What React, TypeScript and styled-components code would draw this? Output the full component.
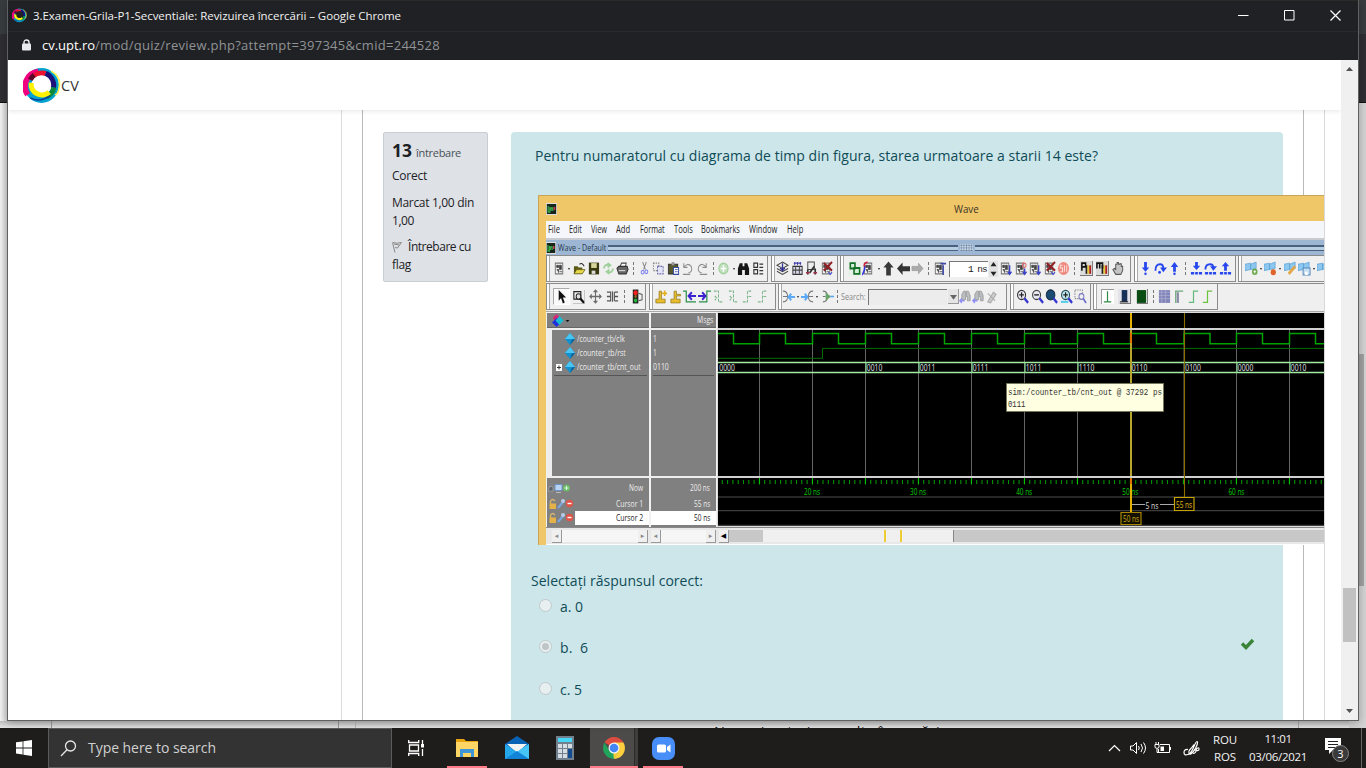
import React, { useLayoutEffect, useRef } from "react";
import styled, { createGlobalStyle, css } from "styled-components";

const Global = createGlobalStyle`
  * { box-sizing: border-box; }
  body { margin: 0; overflow: hidden; font-family: "Open Sans", "Noto Sans", sans-serif; }
  svg { display: block; flex: none; }
`;

/* ---------- fitted text ---------- */

const TextBox = styled.span<{ $w: number; $size: number; $color?: string; $weight?: number; $lh?: number }>`
  display: block;
  flex: none;
  width: ${(p) => p.$w}px;
  height: ${(p) => p.$lh ?? 18}px;
  line-height: ${(p) => p.$lh ?? 18}px;
  font-size: ${(p) => p.$size}px;
  font-weight: ${(p) => p.$weight ?? 400};
  color: ${(p) => p.$color ?? "inherit"};
  white-space: pre;
`;
const Condensed = styled.span`
  display: inline-block;
  transform-origin: left center;
`;

type FitProps = { w: number; size: number; color?: string; weight?: number; lh?: number; children: string };

/* Sets the tracking so that the run of text is exactly as wide as its box. */
function Fit({ w, size, color, weight, lh, children }: FitProps) {
  const ref = useRef<HTMLSpanElement>(null);
  useLayoutEffect(() => {
    const el = ref.current;
    if (!el) return;
    el.style.letterSpacing = "0px";
    const natural = el.getBoundingClientRect().width;
    el.style.letterSpacing = `${(w - natural) / children.length}px`;
  }, [w, children]);
  return (
    <TextBox $w={w} $size={size} $color={color} $weight={weight} $lh={lh}>
      <span ref={ref}>{children}</span>
    </TextBox>
  );
}

/* Condenses the glyphs themselves, for the simulator's narrow interface font. */
function Narrow({ w, size = 9.4, color, lh = 14, children }: Omit<FitProps, "size"> & { size?: number }) {
  const ref = useRef<HTMLSpanElement>(null);
  useLayoutEffect(() => {
    const el = ref.current;
    if (el) el.style.transform = `scaleX(${w / el.offsetWidth})`;
  }, [w, children]);
  return (
    <TextBox $w={w} $size={size} $color={color} $lh={lh}>
      <Condensed ref={ref}>{children}</Condensed>
    </TextBox>
  );
}

/* ---------- desktop and window frame ---------- */

const Desktop = styled.div`
  position: relative;
  display: flex;
  flex-direction: column;
  width: 1366px;
  height: 768px;
  overflow: hidden;
  background: #fff;
`;

const BackWindow = styled.div`
  display: flex;
  flex-direction: column;
  height: 728px;
`;
const BackTabs = styled.div`
  height: 34px;
  background: #393c3f;
`;
const BackBar = styled.div`
  height: 69px;
  background: #2f2e33;
  border-bottom: 1px solid #111;
`;
const BackPage = styled.div`
  display: flex;
  flex: 1;
  align-items: flex-end;
  background: linear-gradient(90deg, #f4f4f4 0, #d2d2d2 8px, #d2d2d2 1358px, #dedede 1366px);
`;
const BackStrip = styled.div`
  display: flex;
  width: 1349px;
  height: 7px;
  background: linear-gradient(#c2c2c2, #e6e6e6);
`;
const BackColumn = styled.div<{ $w: number; $line: string }>`
  flex: none;
  width: ${(p) => p.$w}px;
  border-right: 1px solid ${(p) => p.$line};
`;
const BackText = styled.div`
  width: 943px;
  height: 7px;
  padding-left: 358px;
  overflow: hidden;
  border-right: 1px solid #aaa;
`;
const BackScroll = styled.div`
  align-self: stretch;
  width: 17px;
  padding: 251px 2px 0 0;
  background: #d4d4d4;
`;
const BackThumb = styled.div`
  height: 232px;
  background: #a3a3a3;
`;

const Window = styled.div`
  position: absolute;
  left: 7px;
  top: 0;
  display: flex;
  flex-direction: column;
  width: 1352px;
  height: 721px;
  border: 1px solid #606060;
  border-top: 0;
  background: #fff;
  box-shadow: 0 2px 9px rgba(0, 0, 0, 0.28);
`;
const TitleBar = styled.div`
  display: flex;
  align-items: center;
  height: 32px;
  padding: 0 0 1px 4px;
  gap: 6px;
  color: #f1f1f1;
  background: #202124;
  border-top: 1px solid #292b28;
  border-bottom: 1px solid #292a2d;
`;
const WindowButtons = styled.div`
  display: flex;
  align-items: center;
  gap: 35px;
  margin-left: auto;
  padding-right: 17px;
`;
const AddressBar = styled.div`
  display: flex;
  align-items: center;
  height: 28px;
  padding: 0 0 2px 14px;
  background: #202124;
`;
const LockSlot = styled.div`
  width: 20px;
`;
const Viewport = styled.div`
  display: flex;
  height: 660px;
  overflow: hidden;
`;
const Page = styled.div`
  width: 1333px;
  height: 660px;
  overflow: hidden;
`;
const SiteHeader = styled.div`
  position: relative;
  display: flex;
  align-items: center;
  height: 50px;
  padding: 2px 0 0 15px;
  background: #fff;
  box-shadow: 0 2px 4px rgba(0, 0, 0, 0.08);
  z-index: 1;
`;
const ScrollBar = styled.div`
  display: flex;
  flex-direction: column;
  align-items: center;
  width: 17px;
  padding: 7px 0;
  background: #f0f0f0;
`;
const ScrollThumb = styled.div`
  width: 13px;
  height: 54px;
  margin: 517px 0 auto;
  background: #c1c1c1;
`;

/* ---------- quiz page ---------- */

const Columns = styled.div`
  display: flex;
  height: 610px;
`;
const LeftPane = styled.div`
  flex: none;
  width: 334px;
  margin-right: 20px;
  border-right: 1px solid #dcdcdc;
`;
const Main = styled.div`
  display: flex;
  flex: none;
  align-items: flex-start;
  gap: 23px;
  width: 942px;
  padding: 22px 0 0 20px;
  border: solid #b9b9b9;
  border-width: 0 1px;
`;
const RightPane = styled.div`
  flex: none;
  width: 17px;
  margin-left: 20px;
  border-left: 1px solid #d9d9d9;
`;
const Info = styled.div`
  display: flex;
  flex: none;
  flex-direction: column;
  gap: 8.4px;
  width: 105px;
  height: 150px;
  padding: 8px;
  color: #1d2125;
  background: #dee2e6;
  border: 1px solid #c7ced4;
  border-radius: 2px;
`;
const Line = styled.div<{ $gap?: number }>`
  display: flex;
  align-items: center;
  gap: ${(p) => p.$gap ?? 0}px;
`;
const Baseline = styled.div`
  display: flex;
  align-items: baseline;
  gap: 4px;
  height: 18px;
`;
const Question = styled.div`
  flex: none;
  width: 772px;
  height: 600px;
  padding-top: 12px;
  color: #0f4c57;
  background: #cde6ea;
  border-radius: 4px;
`;
const Prompt = styled.div`
  padding-left: 24px;
`;
const AnswerTitle = styled.div`
  padding: 24px 0 2px 20px;
`;
const Answer = styled.div`
  display: flex;
  align-items: center;
  height: 24px;
  margin-bottom: 17.3px;
  padding: 0 29px 0 28px;
  gap: 8px;
`;
const Radio = styled.span<{ $on?: boolean }>`
  display: flex;
  align-items: center;
  justify-content: center;
  width: 13px;
  height: 13px;
  margin-top: -3px;
  border: 1px solid #c0c9cb;
  border-radius: 50%;
  background: #e8eff1;
  &::after {
    content: "";
    width: 7px;
    height: 7px;
    border-radius: 50%;
    background: ${(p) => (p.$on ? "#bec5c6" : "transparent")};
  }
`;
const Mark = styled.span`
  margin: -9px -1px 0 auto;
`;

/* ---------- Wave simulator ---------- */

const Wave = styled.div`
  display: flex;
  flex-direction: column;
  width: 786px;
  height: 350px;
  margin: 27px 0 0 27px;
  padding-left: 7px;
  font-family: "Open Sans", sans-serif;
  color: #222;
  background: #efc668;
  border: solid #c9a55a;
  border-width: 1px 0 0 1px;
`;
const WaveTitle = styled.div`
  display: flex;
  align-items: center;
  height: 25px;
  gap: 397px;
`;
const Menu = styled.div`
  display: flex;
  height: 17px;
  padding-left: 2px;
  background: #f4f6f9;
`;
const MenuItem = styled.div<{ $gap: number }>`
  margin-right: ${(p) => p.$gap}px;
`;
const PaneTitle = styled.div`
  display: flex;
  align-items: center;
  height: 17px;
  gap: 2px;
  background: #9cb6d3;
  border-top: 2px solid #c8cbd0;
`;
const Grip = styled.div`
  flex: 1;
  height: 6px;
  border: solid #4a627f;
  border-width: 2px 0 1px;
  background: #b6cde2;
`;
const GripDots = styled.div`
  width: 13px;
  height: 7px;
  background: radial-gradient(#60758f 0.7px, transparent 1px) 0 0 / 2.6px 2.6px #c0d2e5;
`;
const ToolRow = styled.div`
  display: flex;
  gap: 2.5px;
  height: 28px;
  background: #efefef;
  border-top: 1px solid #8b8b8b;
`;
const Group = styled.div<{ $w: number; $pad: number }>`
  display: flex;
  flex: none;
  align-items: center;
  width: ${(p) => p.$w}px;
  height: 26px;
  padding-left: ${(p) => p.$pad}px;
  overflow: hidden;
  background: #f0f0f0;
  border: solid #8c8c8c;
  border-width: 0 1px 1px 1px;
  box-shadow: inset 2px 0 #fff, inset 3px 0 #a9a9a9;
`;
const Cell = styled.span<{ $w: number; $pressed?: boolean }>`
  display: flex;
  flex: none;
  align-items: center;
  justify-content: center;
  width: ${(p) => p.$w}px;
  height: 17px;
  ${(p) =>
    p.$pressed &&
    css`
      border: 1px solid #aaa;
      border-right-color: #fff;
      border-bottom-color: #fff;
      background: #fafafa;
    `}
`;
const Separator = styled.i`
  flex: none;
  width: 1px;
  height: 13px;
  margin: 0 3px;
  border-left: 1px dashed #777;
`;
const Drop = styled.i`
  flex: none;
  margin: 1px 1.75px 0;
  border: 1.5px solid transparent;
  border-top: 2px solid #222;
  border-bottom: 0;
`;
const Field = styled.span<{ $w: number; $bg: string }>`
  display: flex;
  flex: none;
  align-items: center;
  justify-content: flex-end;
  width: ${(p) => p.$w}px;
  height: 16px;
  margin-left: 2px;
  padding: 1px 1px 0 0;
  font: 9.5px "Liberation Mono", monospace;
  letter-spacing: -1.1px;
  background: ${(p) => p.$bg};
  border: solid #777;
  border-width: 1.5px 0 0 1.5px;
`;
const Panes = styled.div`
  display: flex;
  height: 216px;
  border: solid #a8a8a8;
  border-width: 1px 0 0 1px;
  background: #dcdcdc;
  padding-top: 1px;
`;
const Column = styled.div<{ $w: number }>`
  display: flex;
  flex: none;
  flex-direction: column;
  width: ${(p) => p.$w}px;
  margin-right: 2px;
  color: #ececec;
  background: #808080;
  outline: 1px solid #f1f1f1;
`;
const ColumnHead = styled.div`
  display: flex;
  align-items: center;
  justify-content: space-between;
  height: 15px;
  padding: 0 3px 0 5px;
  border-bottom: 1px solid #666;
`;
const Signals = styled.div<{ $strip?: boolean }>`
  height: 150px;
  padding: 1.5px 2px 0 2px;
  border: solid #eee;
  border-width: 2px 0 2px ${(p) => (p.$strip ? 5 : 0)}px;
`;
const SignalRow = styled.div<{ $indent: number }>`
  display: flex;
  align-items: center;
  height: 14.4px;
  gap: 2px;
  padding-left: ${(p) => p.$indent}px;
`;
const Rule = styled.div`
  height: 1px;
  background: #555;
`;
const CursorRow = styled.div<{ $h: number }>`
  display: flex;
  align-items: center;
  height: ${(p) => p.$h}px;
`;
const CursorText = styled.div<{ $white?: boolean }>`
  display: flex;
  flex: 1;
  align-items: center;
  justify-content: flex-end;
  height: 100%;
  padding-right: 6px;
  color: ${(p) => (p.$white ? "#222" : "#ececec")};
  background: ${(p) => (p.$white ? "#fff" : "transparent")};
`;
const ScrollRow = styled.div`
  display: flex;
  height: 18px;
  padding: 2px 0 2px 6px;
  background: #e8e8e8;
  border-top: 1px solid #888;
  border-bottom: 1px solid #fff;
`;
const MiniScroll = styled.div<{ $w: number; $bg?: string }>`
  display: flex;
  flex: none;
  align-items: center;
  justify-content: space-between;
  width: ${(p) => p.$w}px;
  margin-right: 3px;
  background: ${(p) => p.$bg ?? "#f6f6f6"};
`;
const MiniButton = styled.span<{ $dark?: boolean }>`
  flex: none;
  width: 10px;
  height: 13px;
  font: 7px/12px "DejaVu Sans", sans-serif;
  text-align: center;
  color: ${(p) => (p.$dark ? "#000" : "#888")};
  background: #f0f0f0;
  border: solid #999;
  border-width: 0 1px 1px 0;
`;
const MiniThumb = styled.span`
  display: flex;
  flex: none;
  gap: 14.5px;
  width: 191px;
  height: 12px;
  margin: 0 auto 0 34px;
  padding-left: 121px;
  background: #f0f0f0;
  border-right: 1px solid #888;
`;
const MiniMark = styled.i`
  flex: none;
  width: 1.5px;
  background: #f0cc38;
`;

/* ---------- toolbar glyphs ---------- */

const page = (
  <>
    <path d="M2.5 2h8v10h-8z" fill="#f3f3f3" stroke="#777" />
    <path d="M4 4h2v2H4zM7 4h2v4H7zM4 8h2v3M7 10h3" fill="#444" stroke="#444" strokeWidth=".8" />
  </>
);
const perfBars = (
  <>
    <path d="M0 0h13v13H0z" fill="#dcdcdc" />
    <path d="M13.500 0v13.500H0" stroke="#777" fill="none" />
    <path d="M6 4h2v8H6z" fill="#222" />
    <path d="M8 4h2v8H8z" fill="#e0c832" />
    <path d="M10 4h2v8h-2z" fill="#b02020" />
  </>
);
const glyphs: Record<string, React.ReactNode> = {
  app: (
    <>
      <path d="M0 1h13v12H0z" fill="#ddd" />
      <path d="M1 2h11v10H1z" fill="#17251b" />
      <path d="M2.5 4v6h2V5M6 9V6h2v3" stroke="#3cae4c" strokeWidth="1.4" fill="none" />
      <path d="M9 5h2v3H9z" fill="#c23a52" />
    </>
  ),
  doc: page,
  open: (
    <>
      <path d="M1 12V5h4l1 1h4v6z" fill="#5d5a16" />
      <path d="M1 12l3-4h9l-3 4z" fill="#e5d64c" stroke="#55510f" strokeWidth=".7" />
      <path d="M7 3q3-2 5 2" stroke="#222" fill="none" />
    </>
  ),
  save: (
    <>
      <path d="M2 1.500h11v11H2z" fill="#3a3a12" />
      <path d="M4.500 2h6v4.500h-6z" fill="#d6d69a" />
      <path d="M5 9h4v3H5z" fill="#ddd" />
    </>
  ),
  refresh: <path d="M2 7q1-5 6-3m-2-2l3 2-3 2M12 7q-1 5-6 3m2-2l-3 2 3 2" fill="none" stroke="#9ed09a" strokeWidth="1.8" />,
  print: (
    <>
      <path d="M4 6l2-4h5l-1 4" fill="#fff" stroke="#444" />
      <path d="M1 7l2-2h9l1 3-2 4H3z" fill="#666" stroke="#333" />
      <path d="M3 9h7" stroke="#ddd" />
    </>
  ),
  cut: (
    <>
      <path d="M5 1l3 7M9 1L6 8" stroke="#888" fill="none" />
      <circle cx="5" cy="10.500" r="1.600" fill="none" stroke="#727af0" />
      <circle cx="9" cy="10" r="1.600" fill="none" stroke="#727af0" />
    </>
  ),
  copy: (
    <>
      <path d="M1.500 2h6v7h-6z" fill="#eee" stroke="#888" strokeDasharray="1.5 1" />
      <path d="M6 5h6v7H6z" fill="#e5e5fa" stroke="#6c6ca8" strokeDasharray="2 1" />
    </>
  ),
  paste: (
    <>
      <path d="M1.500 3h10v9h-10z" fill="#57572d" stroke="#333" />
      <path d="M5 1h3v3H5z" fill="#999" />
      <path d="M7 6h5.500v6.500H7z" fill="#fff" stroke="#334c9e" />
      <path d="M8.500 8h3M8.500 10h3" stroke="#334c9e" strokeWidth=".8" />
    </>
  ),
  undo: <path d="M3 2v4h4M3 6q4-5 8-1 2 5-3 6M2 12.500h8" fill="none" stroke="#8d8d8d" strokeWidth="1.100" />,
  redo: <path d="M11 2v4H7M11 6Q7 1 3 5q-2 5 3 6M4 12.500h8" fill="none" stroke="#8d8d8d" strokeWidth="1.100" />,
  add: (
    <>
      <circle cx="7" cy="7" r="5" fill="#bfe0ba" stroke="#9fcd9a" />
      <path d="M7 4v6M4 7h6" stroke="#fff" strokeWidth="1.6" />
    </>
  ),
  find: <path d="M1 13V7l2-5h3v3h2V2h3l2 5v6H8.500V8.500h-3V13z" fill="#161616" />,
  tree: <path d="M2 2h4v4H2zM2 8h4v4H2zM8 3h4M8 6h4M8 9h4M8 12h4" fill="none" stroke="#333" strokeWidth="1.200" />,
  layers: (
    <>
      <path d="M7 1l6 3-6 3-6-3z" fill="#eee" stroke="#444" />
      <path d="M1 7l6 3 6-3M1 9.500l6 3 6-3" fill="none" stroke="#444" />
      <path d="M7 2v7M4.500 6.500L7 9l2.500-2.500" stroke="#34349a" strokeWidth="1.400" fill="none" />
    </>
  ),
  compile: (
    <>
      <path d="M2 5h10v7.500H2z" fill="#d9d9ea" stroke="#333" />
      <path d="M2 8.500h10M5 5v7M9 5v7" stroke="#444" />
      <path d="M3 2h8M4 1v3M7 1v3M10 1v3" stroke="#3c3ca8" />
    </>
  ),
  simulate: (
    <>
      <path d="M3 1h7v7H3z" fill="#eee" stroke="#444" />
      <path d="M3 12.500V8M11 12.500V7M5 11l5-6" stroke="#333" strokeWidth="1.800" />
      <path d="M1 11h4M9 11h4" stroke="#a03045" strokeWidth="1.500" />
    </>
  ),
  stopDoc: (
    <>
      {page}
      <path d="M4 2l9 7M13 1L4 9" stroke="#8f1f24" strokeWidth="2" />
      <path d="M9 10.500l2 2 2-2" stroke="#3b46d0" fill="none" />
    </>
  ),
  restart: (
    <>
      <path d="M0 0h14v14H0z" fill="#e9efe9" />
      <path d="M2.500 2h5v5h-5zM6.500 6.500h6v5.500h-6z" fill="#d8f0d8" stroke="#137028" strokeWidth="1.700" />
    </>
  ),
  lines: (
    <>
      {page}
      <path d="M6 1Q1 2 3 6" stroke="#d2233e" fill="none" strokeWidth="1.700" />
      <path d="M3 5Q3 10 0 13" stroke="#3434d8" fill="none" strokeWidth="1.600" />
    </>
  ),
  up: <path d="M7 .5l5.500 5.500H9.500v7.500h-5V6h-3z" fill="#3a3a3a" />,
  left: <path d="M0 7l6-5.500V5h8v4.500H6V13z" fill="#333" />,
  right: <path d="M13 7L8 2v3H1v4h7v3z" fill="#aaa" stroke="#999" strokeWidth=".6" />,
  runTo: (
    <>
      {page}
      <path d="M11 13V4M8 2.500h6" stroke="#3f49aa" strokeWidth="1.600" />
    </>
  ),
  run: (
    <>
      {page}
      <path d="M11.500 4v8M9.500 10l2 2.500 2-2.500" stroke="#3941c8" fill="none" strokeWidth="1.400" />
    </>
  ),
  runRed: (
    <>
      {page}
      <path d="M11.500 7v5M9.500 10l2 2.500 2-2.500" stroke="#3941c8" fill="none" strokeWidth="1.400" />
      <circle cx="11" cy="4" r="2" fill="none" stroke="#e06a6a" />
    </>
  ),
  brk: (
    <>
      <circle cx="7" cy="7" r="6" fill="#ee8a80" />
      <path d="M6 4H3.500v2.500H6V10H3.500M8 4v6M10.500 4v6" stroke="#fbe2de" fill="none" />
    </>
  ),
  perf: (
    <>
      {perfBars}
      <path d="M2 9V2h4v3.500H2" stroke="#111" strokeWidth="1.700" fill="none" />
    </>
  ),
  perfM: (
    <>
      {perfBars}
      <path d="M1 7V2h6v5M4 2v5" stroke="#111" strokeWidth="1.700" fill="none" />
    </>
  ),
  hand: <path d="M4 12.500L1 8l1.500-1L4 8V3h1.500V1.500H7V3h1.500V2.500H10V5h1.500v4l-2 3.500z" fill="#c4c4c4" stroke="#555" />,
  stepIn: (
    <>
      <path d="M5.500 1h3v5h2.500L7 10 3 6h2.500z" fill="#2848ee" />
      <circle cx="7" cy="12" r="1.300" fill="#2848ee" />
    </>
  ),
  stepOver: (
    <>
      <path d="M1.500 9q0-6 5-6 3.500 0 3.500 4" stroke="#2848ee" strokeWidth="2" fill="none" />
      <path d="M6.500 6H14l-4 4.500z" fill="#2848ee" />
      <circle cx="6" cy="10.500" r="1.500" fill="#2848ee" />
    </>
  ),
  stepOut: (
    <>
      <path d="M5.500 10V5.500H3L7 1l4 4.500H8.500V10z" fill="#2848ee" />
      <circle cx="7" cy="12" r="1.300" fill="#2848ee" />
    </>
  ),
  stepIn2: (
    <>
      <path d="M5.500 1h3v3.500h2.500L7 8.500l-4-4h2.500z" fill="#2848ee" />
      <path d="M1 11.500h3.500M5.500 11.500h3M9.500 11.500H13" stroke="#2848ee" strokeWidth="2.400" />
    </>
  ),
  stepOver2: (
    <>
      <path d="M1.500 8q0-5 5-5 3.500 0 3.500 3" stroke="#2848ee" strokeWidth="2" fill="none" />
      <path d="M6.500 5H14l-4 4z" fill="#2848ee" />
      <path d="M1 11.500h3.500M5.500 11.500h3M9.500 11.500H13" stroke="#2848ee" strokeWidth="2.400" />
    </>
  ),
  stepOut2: (
    <>
      <path d="M5.500 9V5H3l4-4 4 4H8.500v4z" fill="#2848ee" />
      <path d="M1 11.500h3.500M5.500 11.500h3M9.500 11.500H13" stroke="#2848ee" strokeWidth="2.400" />
    </>
  ),
  flag: (
    <>
      <path d="M0 3l6-1v6l-6 1zM6 3l6-2v6l-6 1z" fill="#8cc8f0" stroke="#5b9fd2" strokeWidth=".7" />
      <circle cx="10.500" cy="10" r="3" fill="#6ba84c" />
      <path d="M10.500 8.500v3M9 10h3" stroke="#fff" strokeWidth=".9" />
    </>
  ),
  flagRed: (
    <>
      <path d="M0 3l6-1v6l-6 1zM6 3l6-2v6l-6 1z" fill="#8cc8f0" stroke="#5b9fd2" strokeWidth=".7" />
      <circle cx="10" cy="10.500" r="2.800" fill="#e0632b" />
    </>
  ),
  flagEdit: (
    <>
      <path d="M0 3l6-1v6l-6 1zM6 3l6-2v6l-6 1z" fill="#8cc8f0" stroke="#5b9fd2" strokeWidth=".7" />
      <path d="M5 12l7-7" stroke="#e0a848" strokeWidth="2.800" />
    </>
  ),
  flagSave: (
    <>
      <path d="M0 3l6-1v6l-6 1zM6 3l6-2v6l-6 1z" fill="#8cc8f0" stroke="#5b9fd2" strokeWidth=".7" />
      <path d="M5.500 6.500h7.500v6.500H5.500z" fill="#c6dff2" stroke="#5585bb" />
      <path d="M7.500 10h3v3h-3z" fill="#fff" />
    </>
  ),
  select: <path d="M4 1v10l2.500-2.500 2 5 2-1-2-4.500H12z" fill="#111" />,
  zoomMode: (
    <>
      <path d="M2 2.500h7.500v7H2z" fill="none" stroke="#222" strokeWidth="1.200" />
      <circle cx="7" cy="7" r="2.500" fill="#ddd" stroke="#222" />
      <path d="M9 9l4 4" stroke="#111" strokeWidth="2.200" />
      <path d="M14 1v13H1" stroke="#999" fill="none" />
    </>
  ),
  pan: <path d="M7 1v12M1 7h12M5 3l2-2 2 2M5 11l2 2 2-2M3 5L1 7l2 2M11 5l2 2-2 2" fill="none" stroke="#6b6b6b" strokeWidth="1.200" />,
  edit: <path d="M1 3h4v8H1M1 7h4M9 3h4M9 11h4M9 3v8M9 7h4M7 2v10" fill="none" stroke="#555" strokeWidth="1.200" />,
  traffic: (
    <>
      <path d="M3 .5h6v13H3z" fill="#222" />
      <path d="M9 4l4 1v5l-4 1" fill="none" stroke="#555" />
      <circle cx="6" cy="3.500" r="2.400" fill="#ef2020" />
      <circle cx="6" cy="7" r="1.300" fill="#906c18" />
      <circle cx="6" cy="10.700" r="1.900" fill="#22b23c" />
    </>
  ),
  addCursor: (
    <>
      <path d="M2 13V9.500h3.500V2H8v7.500h4V13z" fill="#e8bd2e" stroke="#8d741b" strokeWidth=".7" />
      <path d="M8.500 4H14M11.500 1.500v5" stroke="#e3b01e" strokeWidth="1.700" />
    </>
  ),
  delCursor: <path d="M2 13V9.500h3.500V2H8v3h4.500v1.500H8v3h4V13z" fill="#e8bd2e" stroke="#8d741b" strokeWidth=".7" />,
  edgeL: (
    <>
      <path d="M0 2h3.500v10H14" stroke="#2b8f4a" strokeWidth="1.300" fill="none" />
      <path d="M6 6.500h8M9.500 3L6 6.500 9.500 10" stroke="#3a22cf" strokeWidth="2" fill="none" />
    </>
  ),
  edgeR: (
    <>
      <path d="M1 12h8.500V2H14" stroke="#2b8f4a" strokeWidth="1.300" fill="none" />
      <path d="M0 6.500h8M4.500 3L8 6.500 4.500 10" stroke="#3a22cf" strokeWidth="2" fill="none" />
    </>
  ),
  fallL: <path d="M2 2h5v10h5M3 6.500l2 2-2 2" stroke="#7fb58d" fill="none" strokeDasharray="3 1" strokeWidth="1.100" />,
  riseR: <path d="M2 12h5V2h5M8 7h4" stroke="#7fb58d" fill="none" strokeDasharray="3 1" strokeWidth="1.100" />,
  branch: (
    <>
      <path d="M1 2q5 0 5 5t-5 5M1 7h5" stroke="#777" fill="none" />
      <path d="M7 7.500h7M10 4.500l-3 3 3 3" stroke="#5aa8f6" strokeWidth="2" fill="none" />
    </>
  ),
  branchR: (
    <>
      <path d="M13 2Q8 2 8 7t5 5M8 7h5" stroke="#777" fill="none" />
      <path d="M0 7.500h7M4 4.500l3 3-3 3" stroke="#5aa8f6" strokeWidth="2" fill="none" />
    </>
  ),
  branchG: (
    <>
      <path d="M2 2q5 0 5 5t-5 5M2 7h3" stroke="#777" fill="none" />
      <path d="M5 3.500l6 3.500-6 4z" fill="#69a568" />
      <path d="M10 7h4" stroke="#5aa8f6" strokeWidth="1.500" />
    </>
  ),
  searchDim: (
    <>
      <path d="M3 10V5l2-3h2v4h1V2h2l2 4v5H9V7H7v3z" fill="#b9bdc0" stroke="#999" strokeWidth=".8" />
      <path d="M1 11h5M3 9l-2 2 2 2" stroke="#8e8ef4" fill="none" strokeWidth="1.500" />
    </>
  ),
  wrench: <path d="M3 12l6-9 3 2-6 8zM3 4l8 7" fill="#ccc" stroke="#aaa" />,
  zoomIn: (
    <>
      <circle cx="6" cy="5.500" r="4.300" fill="#e8e8f2" stroke="#333" strokeWidth="1.200" />
      <path d="M3.500 5.500h5M6 3v5" stroke="#222" strokeWidth="1.300" />
      <path d="M9 8.500l4 4.500" stroke="#3535d0" strokeWidth="2.300" />
    </>
  ),
  zoomOut: (
    <>
      <circle cx="6" cy="5.500" r="4.300" fill="#e8e8f2" stroke="#444" strokeWidth="1.200" />
      <path d="M3.500 5.500h5" stroke="#222" strokeWidth="1.300" />
      <path d="M9 8.500l4 4.500" stroke="#3535d0" strokeWidth="2.300" />
    </>
  ),
  zoomFull: (
    <>
      <circle cx="6" cy="5.500" r="4.700" fill="#1b4a72" stroke="#152c44" />
      <path d="M9 8.500l4 4.500" stroke="#3535d0" strokeWidth="2.300" />
    </>
  ),
  zoomCursor: (
    <>
      <circle cx="6" cy="5.500" r="4.300" fill="#bfe9ee" stroke="#234c5c" strokeWidth="1.200" />
      <path d="M6 3v5M3.500 5.500h5" stroke="#222" strokeWidth="1.300" />
      <path d="M1 12h8" stroke="#55cfe8" strokeWidth="2" />
      <path d="M9 8.500l4 4.500" stroke="#3535d0" strokeWidth="2.300" />
    </>
  ),
  zoomRange: (
    <>
      <path d="M1 1h8v8H1z" fill="none" stroke="#888" strokeDasharray="1.500 1" />
      <circle cx="8" cy="7" r="2.700" fill="#eee" stroke="#7777bb" />
      <path d="M10 9l3 4" stroke="#6b6bc9" strokeWidth="1.700" />
    </>
  ),
  beam: (
    <>
      <path d="M0 0h14v14H0z" fill="#fff" />
      <path d="M.5 14V.5H14" stroke="#999" fill="none" />
      <path d="M7 2v10M3 12h8" stroke="#2f8a46" strokeWidth="1.300" fill="none" />
    </>
  ),
  blue: (
    <>
      <path d="M0 0h14v14H0z" fill="#e3e3ea" />
      <path d="M13.500 0v13.500H2" stroke="#777" fill="none" />
      <path d="M4 1h6v11H4z" fill="#173058" />
      <path d="M2 12h9" stroke="#222" />
    </>
  ),
  green: (
    <>
      <path d="M13.500 0v13.500H2" stroke="#777" fill="none" />
      <path d="M2 1h10v12H2z" fill="#0b4c12" />
    </>
  ),
  hatch: (
    <>
      <path d="M1 1h12v12H1z" fill="#8285b8" />
      <path d="M1 3h12M1 6h12M1 9h12M4 1v12M8 1v12" stroke="#aeb0d2" strokeWidth=".7" />
    </>
  ),
  pulse: (
    <>
      <path d="M4 13V2h8" stroke="#69a978" fill="none" strokeWidth="1.300" />
      <path d="M5 3h2.500v10H5z" fill="#8d8da8" />
    </>
  ),
  rise: <path d="M2 12.500h5V2h5" stroke="#66b97a" fill="none" strokeWidth="1.300" />,
  riseG: <path d="M2 12.500h5V2h5" stroke="#6cc23c" fill="none" strokeWidth="1.300" />,
};

function Tools({ items, cell = 14.5 }: { items: string; cell?: number }) {
  return (
    <>
      {items.split(" ").map((name, i) => {
        if (name === "|") return <Separator key={i} />;
        if (name === ".") return <Drop key={i} />;
        return (
          <Cell key={i} $w={cell} $pressed={name === "select"}>
            <svg width="13" height="15" viewBox="0 0 14 14" preserveAspectRatio="none">{glyphs[name]}</svg>
          </Cell>
        );
      })}
    </>
  );
}

const Gem = () => (
  <svg width="10" height="12" viewBox="0 0 10 11" preserveAspectRatio="none">
    <path d="M5 0l5 5.500L5 11 0 5.500z" fill="#1391cf" />
    <path d="M5 0l5 5.500H0z" fill="#48c5f3" />
    <path d="M5 11l5-5.500-3 .5z" fill="#075d94" />
  </svg>
);
const Gems = () => (
  <svg width="18" height="13" viewBox="0 0 18 13">
    <path d="M4.500 0l4 4-4 4-4-4z" fill="#d32c75" />
    <path d="M4.500 4l4.500 4.500L4.500 13 0 8.500z" fill="#2130dd" />
    <path d="M7.500 2l4 4.500-4 4.500-4-4.500z" fill="#19bcd4" />
    <path d="M13.500 6h4l-2 2z" fill="#111" />
  </svg>
);
const LockTools = () => (
  <svg width="28" height="12" viewBox="0 0 28 12">
    <path d="M3.500 6V3q2-3 4.500 0" stroke="#d9b768" strokeWidth="1.300" fill="none" />
    <path d="M2.500 5.500h6.500V11H2.500z" fill="#e5b24a" />
    <path d="M11 10l5-6" stroke="#7ba5e0" strokeWidth="2" />
    <circle cx="16" cy="3" r="2" fill="#b8cbe8" />
    <circle cx="22.500" cy="5.500" r="3.700" fill="#de5448" />
    <path d="M20.500 5.500h4" stroke="#fff" strokeWidth="1.400" />
  </svg>
);
const NowTools = () => (
  <svg width="28" height="12" viewBox="0 0 28 12">
    <path d="M1 9l2-5 3 1v4z" fill="#59646e" stroke="#aaa" strokeWidth=".7" />
    <path d="M8 2.500h7v6H8z" fill="#b9d4f3" stroke="#6d94c6" />
    <path d="M9 10.500h5" stroke="#bbb" />
    <circle cx="19.500" cy="6" r="3.500" fill="#6dbb68" />
    <path d="M19.500 4v4M17.500 6h4" stroke="#e0ffe0" />
  </svg>
);

/* ---------- wave chart ---------- */

const GRID = [759.5, 812.5, 865.5, 918.5, 971.5, 1024.5, 1077.5, 1130.5, 1184, 1236.5, 1289.5];
const BUS: [number, string][] = [
  [718.5, "0000"], [866, "0010"], [919, "0011"], [972, "0111"], [1025, "1011"], [1078, "1110"], [1131, "0110"], [1184.5, "0100"], [1237, "0000"], [1290, "0010"],
];
const clock = "M718 333.5H733.5V343.7" + GRID.map((x) => `H${x}V333.5H${x + 26}V343.7`).join("") + "H1324";

const ChartText = styled.text<{ $size: number; $mono?: boolean }>`
  font-family: ${(p) => (p.$mono ? '"Liberation Mono", monospace' : '"Open Sans", sans-serif')};
  font-size: ${(p) => p.$size}px;
`;

function Chart() {
  const ticks = Array.from({ length: 115 }, (_, i) => 722.3 + i * 5.3);
  return (
    <svg width="606" height="213" viewBox="718 313 606 213">
      <path d="M718 312h606v214H718z" fill="#000" />
      {GRID.map((x) => (
        <path key={x} d={`M${x} 330V477`} stroke="#646464" />
      ))}
      <path d={clock} fill="none" stroke="#00a400" strokeWidth="1.5" />
      <path d="M718 358.300H822.500V348.400H1324" fill="none" stroke="#006f00" />
      <path d="M718 362.500H1324M718 372.500H1324" stroke="#a2ecA2" strokeWidth="1.3" />
      {BUS.slice(1).map(([x]) => (
        <path key={x} d={`M${x} 362.5V372.5`} stroke="#8cdc8c" strokeWidth="1.2" />
      ))}
      <path d="M718 329H1324M718 477H1324" stroke="#d0d0d0" strokeWidth="2" />
      {ticks.map((x) => (
        <path key={x} d={`M${x} 480V484`} stroke="#009400" strokeWidth="1.1" />
      ))}
      {GRID.map((x) => (
        <path key={x} d={`M${x} 478V484.5`} stroke="#00c000" strokeWidth="1.1" />
      ))}
      <path d="M718 497H1324M718 510.700H1324M718 525.300H1324" stroke="#4c4c4c" />
      {[20, 30, 40, 50, 60].map((n, i) => (
        <ChartText key={n} $size={9} x={804 + i * 106.1} y="494.500" textLength="16" lengthAdjust="spacingAndGlyphs" fill="#00d000">
          {n + " ns"}
        </ChartText>
      ))}
      <path d="M1184.500 313V328M1184.500 330V497" stroke="#8b7000" strokeWidth="1.100" />
      <path d="M1131 313V328M1131 478V512" stroke="#e1b300" strokeWidth="2" />
      <path d="M1131 330V476" stroke="#b7a52d" strokeWidth="2" />
      <path d="M1131 333V343M1131 478V484" stroke="#e07000" strokeWidth="2" />
      {BUS.map(([x, v]) => (
        <ChartText key={x} $size={9} x={x + 0.8} y="371" textLength="15.500" lengthAdjust="spacingAndGlyphs" fill="#e6e6ee">
          {v}
        </ChartText>
      ))}
      <path d="M1132 504.500H1145M1160 504.500H1174" stroke="#aaa" />
      <ChartText $size={9} x="1145.500" y="508.500" textLength="13" lengthAdjust="spacingAndGlyphs" fill="#ddd">5 ns</ChartText>
      <path d="M1174.500 497.500h19.500v13h-19.500z" fill="#080600" stroke="#c6a100" strokeWidth="1.200" />
      <ChartText $size={9} x="1176" y="507.500" textLength="16" lengthAdjust="spacingAndGlyphs" fill="#e0bb10">55 ns</ChartText>
      <path d="M1121 512.500h20v12h-20z" fill="#141000" stroke="#a38500" strokeWidth="1.200" />
      <ChartText $size={9} x="1123" y="522" textLength="16" lengthAdjust="spacingAndGlyphs" fill="#d0ad10">50 ns</ChartText>
      <path d="M1006.500 383.500h157v28h-157z" fill="#ffffe1" stroke="#77775c" />
      <ChartText $mono $size={9.5} x="1008" y="395" textLength="154" lengthAdjust="spacingAndGlyphs" fill="#333">
        sim:/counter_tb/cnt_out @ 37292 ps
      </ChartText>
      <ChartText $mono $size={9.5} x="1008" y="407" textLength="17.500" lengthAdjust="spacingAndGlyphs" fill="#333">0111</ChartText>
    </svg>
  );
}

const MENU: [string, number, number][] = [
  ["File", 12, 8.5], ["Edit", 13, 9], ["View", 16, 9.5], ["Add", 14.5, 9], ["Format", 25, 9], ["Tools", 19, 8.5], ["Bookmarks", 39, 9], ["Window", 28.5, 9.5], ["Help", 16.5, 0],
];

function WaveWindow() {
  return (
    <Wave>
      <WaveTitle>
        <svg width="11" height="14" viewBox="0 0 13 14" preserveAspectRatio="none">{glyphs.app}</svg>
        <Narrow w={24.5} size={11.5} lh={16} color="#3c3525">Wave</Narrow>
      </WaveTitle>
      <Menu>
        {MENU.map(([t, w, gap]) => (
          <MenuItem key={t} $gap={gap}>
            <Narrow w={w} size={10} lh={17}>{t}</Narrow>
          </MenuItem>
        ))}
      </Menu>
      <PaneTitle>
        <svg width="10" height="14" viewBox="0 0 13 14" preserveAspectRatio="none">{glyphs.app}</svg>
        <Narrow w={48} size={9.5} lh={14} color="#26364d">Wave - Default</Narrow>
        <Grip />
        <GripDots />
        <Grip />
      </PaneTitle>
      <ToolRow>
        <Group $w={222} $pad={5}>
          <Tools items="doc . open save refresh print | cut copy paste undo redo | add . find tree" />
        </Group>
        <Group $w={67} $pad={4}>
          <Tools items="layers compile simulate stopDoc" />
        </Group>
        <Group $w={291} $pad={6}>
          <Tools items="restart lines . up left right | runTo" />
          <Field $w={39} $bg="#fff">1 ns</Field>
          <Cell $w={11}>
            <svg width="9" height="16" viewBox="0 0 9 15" preserveAspectRatio="none">
              <path d="M0 0h9v15H0z" fill="#e2e2e2" />
              <path d="M4.500 1l3 4h-6zM4.500 14l3-4h-6z" fill="#222" />
            </svg>
          </Cell>
          <Tools items="run runRed run stopDoc brk |" />
          <Tools items="perf perfM hand" cell={16} />
        </Group>
        <Group $w={102} $pad={4}>
          <Tools items="stepIn stepOver stepOut | stepIn2 stepOver2 stepOut2" />
        </Group>
        <Group $w={87} $pad={5}>
          <Tools items="flag . flagRed . flagEdit flagSave . flag" cell={14} />
        </Group>
      </ToolRow>
      <ToolRow>
        <Group $w={100} $pad={6}>
          <Tools items="select zoomMode pan edit | traffic" cell={17} />
        </Group>
        <Group $w={127} $pad={4}>
          <Tools items="addCursor delCursor edgeL edgeR fallL fallL riseR riseR" />
        </Group>
        <Group $w={229} $pad={2}>
          <Tools items="branch . branchR . branchG |" cell={14} />
          <Narrow w={25} size={9.5} lh={16} color="#888">Search:</Narrow>
          <Field $w={79} $bg="#ececec" />
          <Cell $w={12}>
            <svg width="11" height="15" viewBox="0 0 11 14" preserveAspectRatio="none">
              <path d="M0 0h11v14H0z" fill="#e5e5e5" />
              <path d="M10.500 0v13.500H0" stroke="#999" fill="none" />
              <path d="M2 5.500h7L5.500 10z" fill="#666" />
            </svg>
          </Cell>
          <Tools items="searchDim searchDim wrench" cell={13} />
        </Group>
        <Group $w={81} $pad={5}>
          <Tools items="zoomIn zoomOut zoomFull zoomCursor zoomRange" />
        </Group>
        <Group $w={125} $pad={5}>
          <Tools items="beam blue green" cell={17} />
          <Tools items="| hatch pulse rise riseG" />
        </Group>
      </ToolRow>
      <Panes>
        <Column $w={102}>
          <ColumnHead><Gems /></ColumnHead>
          <Signals $strip>
            <SignalRow $indent={11}><Gem /><Narrow w={48}>/counter_tb/clk</Narrow></SignalRow>
            <SignalRow $indent={11}><Gem /><Narrow w={49}>/counter_tb/rst</Narrow></SignalRow>
            <SignalRow $indent={1}>
              <svg width="8" height="9" viewBox="0 0 8 9">
                <path d="M1 1h6v7H1z" fill="#fff" />
                <path d="M2 4.500h4M4 2.500v4" stroke="#333" />
              </svg>
              <Gem />
              <Narrow w={64}>/counter_tb/cnt_out</Narrow>
            </SignalRow>
            <Rule />
          </Signals>
          <CursorRow $h={19}><NowTools /><CursorText><Narrow w={14}>Now</Narrow></CursorText></CursorRow>
          <CursorRow $h={14}><LockTools /><CursorText><Narrow w={27}>Cursor 1</Narrow></CursorText></CursorRow>
          <CursorRow $h={14}><LockTools /><CursorText $white><Narrow w={27}>Cursor 2</Narrow></CursorText></CursorRow>
        </Column>
        <Column $w={65}>
          <ColumnHead><span /><Narrow w={16}>Msgs</Narrow></ColumnHead>
          <Signals>
            <SignalRow $indent={0}><Narrow w={3.5}>1</Narrow></SignalRow>
            <SignalRow $indent={0}><Narrow w={3.5}>1</Narrow></SignalRow>
            <SignalRow $indent={0}><Narrow w={15.5}>0110</Narrow></SignalRow>
            <Rule />
          </Signals>
          <CursorRow $h={19}><CursorText><Narrow w={20}>200 ns</Narrow></CursorText></CursorRow>
          <CursorRow $h={14}><CursorText><Narrow w={16}>55 ns</Narrow></CursorText></CursorRow>
          <CursorRow $h={14}><CursorText $white><Narrow w={16}>50 ns</Narrow></CursorText></CursorRow>
        </Column>
        <Chart />
      </Panes>
      <ScrollRow>
        <MiniScroll $w={96}><MiniButton>◂</MiniButton><MiniButton>▸</MiniButton></MiniScroll>
        <MiniScroll $w={65}><MiniButton>◂</MiniButton><MiniButton>▸</MiniButton></MiniScroll>
        <MiniScroll $w={606} $bg="#c8c8c8">
          <MiniButton $dark>◀</MiniButton>
          <MiniThumb><MiniMark /><MiniMark /></MiniThumb>
        </MiniScroll>
      </ScrollRow>
    </Wave>
  );
}

/* ---------- shared icons ---------- */

function Ring({ size, dark }: { size: number; dark?: boolean }) {
  return (
    <svg width={size} height={size} viewBox="0 0 37 37" fill="none">
      <circle cx="18" cy="18" r="13.500" stroke="#00a2cf" strokeWidth="7" />
      <path d="M4.500 27A14.500 14.500 0 0 1 15 4.500" stroke="#f0007f" strokeWidth="5.500" />
      <path d="M8.500 12A12 12 0 0 1 22 6.500" stroke="#ee1230" strokeWidth="5.500" />
      <path d="M7 12.500A13 13 0 0 1 11 8" stroke="#5c0a2c" strokeWidth="5" />
      <path d="M22 6.500A12.500 12.500 0 0 1 29.500 20" stroke="#1b1178" strokeWidth="5.500" />
      <path d="M30 20A13 13 0 0 1 23 29" stroke="#0a8a3a" strokeWidth="5" />
      <path d="M7 30Q16 35 26 28" stroke="#0d3f9c" strokeWidth="1.500" />
      <circle cx="18" cy="17.500" r="9.500" fill={dark ? "#202124" : "#fff"} />
      <path d="M8 15.500A10.500 10.500 0 0 0 25.500 24.500" stroke="#fff100" strokeWidth="5" />
      <path d="M27.500 4Q36.500 9 35.500 18T31 27" stroke="#fff34a" strokeWidth="1.600" />
    </svg>
  );
}

/* ---------- taskbar ---------- */

const ACTIVE_TILE = "linear-gradient(90deg, #4d4b4a 44px, #2c2a2a 44px, #2c2a2a 45px, #403e3d 45px)";

const Taskbar = styled.div`
  display: flex;
  flex: none;
  height: 40px;
  color: #f4f4f4;
  background: #1f1d1c;
`;
const TaskButton = styled.div<{ $w: number; $line?: number; $active?: boolean }>`
  display: flex;
  flex: none;
  align-items: center;
  justify-content: center;
  width: ${(p) => p.$w}px;
  ${(p) =>
    p.$line &&
    css`
      background-image: linear-gradient(#ff7b87, #ff7b87)${p.$active ? `, ${ACTIVE_TILE}` : ""};
      background-size: ${p.$line}px 2px${p.$active ? ", 100% 100%" : ""};
      background-position: center bottom;
      background-repeat: no-repeat;
    `}
`;
const SearchBox = styled.div`
  display: flex;
  flex: none;
  align-items: center;
  width: 344px;
  gap: 11px;
  padding-left: 11px;
  color: #d0d0d0;
  background: #333;
  border: 1px solid #5c5c5c;
`;
const Tray = styled.div`
  display: flex;
  align-items: center;
  margin-left: auto;
`;
const TrayStack = styled.div<{ $w: number }>`
  display: flex;
  flex-direction: column;
  align-items: center;
  width: ${(p) => p.$w}px;
`;
const TrayIcon = styled.div<{ $gap: number }>`
  margin-right: ${(p) => p.$gap}px;
`;
const PeekEdge = styled.div`
  align-self: stretch;
  width: 5px;
  border-left: 1px solid #666;
`;

function TaskbarView() {
  return (
    <Taskbar>
      <TaskButton $w={48}>
        <svg width="16" height="16" viewBox="0 0 16 16">
          <path d="M0 2.300l6.600-.9v6.100H0zM7.400 1.200L16 0v7.500H7.400zM0 8.400h6.600v6.100L0 13.600zM7.400 8.400H16V16l-8.600-1.200z" fill="#fff" />
        </svg>
      </TaskButton>
      <SearchBox>
        <svg width="17" height="17" viewBox="0 0 17 17">
          <circle cx="10.500" cy="6" r="5" fill="none" stroke="#e6e6e6" strokeWidth="1.300" />
          <path d="M7 9.800L1 16" stroke="#e6e6e6" strokeWidth="1.300" />
        </svg>
        <Fit w={128} size={14} lh={20}>Type here to search</Fit>
      </SearchBox>
      <TaskButton $w={48}>
        <svg width="17" height="16" viewBox="0 0 17 16" fill="none" stroke="#fff" strokeWidth="1.300">
          <path d="M.7 0v2.500h10V0M.7 16v-2.500h10V16M1.500 5h9v6h-9zM14.500 0v4M14.500 9v7" />
          <path d="M13 4h3v3.500h-3z" fill="#fff" stroke="none" />
        </svg>
      </TaskButton>
      <TaskButton $w={54} $line={40}>
        <svg width="22" height="20" viewBox="0 0 22 20">
          <path d="M0 1h8l2 2h12v16H0z" fill="#e9a50f" />
          <path d="M0 4h22v15H0z" fill="#ffd666" />
          <path d="M4 11h14v8h-3v-4H7v4H4z" fill="#3f96d6" />
        </svg>
      </TaskButton>
      <TaskButton $w={45}>
        <svg width="24" height="24" viewBox="0 0 24 24">
          <path d="M0 8l12-8 12 8v5H0z" fill="#0a62b5" />
          <path d="M2 8h20l-10 9z" fill="#f3f3f3" />
          <path d="M0 8v15h24V8L12 16z" fill="#25a7ec" />
          <path d="M24 8v15L10 15l2 1z" fill="#46c6f6" />
          <path d="M0 23L12 15l12 8z" fill="#1284d8" />
        </svg>
      </TaskButton>
      <TaskButton $w={51}>
        <svg width="18" height="24" viewBox="0 0 18 24">
          <path d="M0 0h18v24H0z" fill="#71808c" />
          <path d="M2 2h14v4H2z" fill="#46d7f7" />
          <path d="M2 8h4v4H2zM7 8h4v4H7zM12 8h4v4h-4zM2 13h4v4H2zM7 13h4v4H7zM2 18h4v4H2zM7 18h4v4H7z" fill="#d5dde3" />
          <path d="M12 13h4v9h-4z" fill="#124b8f" />
        </svg>
      </TaskButton>
      <TaskButton $w={48} $line={48} $active>
        <svg width="24" height="24" viewBox="0 0 24 24">
          <path d="M12 12L2.500 6.500A11 11 0 0 1 21.500 6.500z" fill="#dc4c3f" />
          <path d="M12 12V6.500h9.500A11 11 0 0 1 12 23z" fill="#fccf3e" />
          <path d="M12 23A11 11 0 0 1 2.500 6.500L7.500 15l9-.5z" fill="#20a35b" />
          <path d="M16.500 14.500L12 23q-1-5 0-7z" fill="#fccf3e" />
          <circle cx="12" cy="12" r="5.500" fill="#f4f4f4" />
          <circle cx="12" cy="12" r="4.300" fill="#4487f4" />
        </svg>
      </TaskButton>
      <TaskButton $w={50} $line={40}>
        <svg width="23" height="23" viewBox="0 0 23 23">
          <rect width="23" height="23" rx="7" fill="#478ef8" />
          <rect x="5" y="7.500" width="9" height="8" rx="1.500" fill="#fff" />
          <path d="M15 10l3.500-2.500v8L15 13z" fill="#fff" />
        </svg>
      </TaskButton>
      <Tray>
        <TrayIcon $gap={9}>
          <svg width="13" height="8" viewBox="0 0 13 8"><path d="M1 7l5.500-5.500L12 7" fill="none" stroke="#fff" strokeWidth="1.200" /></svg>
        </TrayIcon>
        <TrayIcon $gap={7}>
          <svg width="17" height="14" viewBox="0 0 17 14" fill="none" stroke="#fff">
            <path d="M.5 5h2.500l3.500-3.500v11L3 9H.5zM8.500 5q1.500 2 0 4M11 3q3 4 0 8M13.500 1.500q4 5.500 0 11" />
          </svg>
        </TrayIcon>
        <TrayIcon $gap={12}>
          <svg width="17" height="14" viewBox="0 0 17 14" fill="none" stroke="#fff">
            <path d="M6 3.500h9.500v8H4.500V8M16.500 6v3M1 3.500h4v3q-2 2-4 0zM2 1v2M4.500 1v2M3 8v3.500h2" />
            <path d="M6.500 5.500H10V10H6.500z" fill="#fff" stroke="none" />
          </svg>
        </TrayIcon>
        <TrayIcon $gap={13}>
          <svg width="17" height="17" viewBox="0 0 17 17" fill="none" stroke="#fff" strokeWidth="1.200">
            <path d="M5 9.500Q1 9 1 12.500t4 2q3-1 5.500-7T14 1.500t0 3.500-4 7-4 1.500 1-4 4-5M10 13.500q3 0 3.500-4.500 2.500-2.500 2.500 0t-4 1" />
          </svg>
        </TrayIcon>
        <TrayStack $w={24}>
          <Fit w={24} size={11.5} lh={17}>ROU</Fit>
          <Fit w={22} size={11.5} lh={17}>ROS</Fit>
        </TrayStack>
        <TrayStack $w={82}>
          <Fit w={27} size={11.5} lh={18}>11:01</Fit>
          <Fit w={58} size={11.5} lh={18}>03/06/2021</Fit>
        </TrayStack>
        <TrayIcon $gap={12}>
          <svg width="30" height="28" viewBox="1319 734 30 28">
            <path d="M1325 736h16v12h-8l-4 4v-4h-4z" fill="#fff" transform="translate(0 2)" />
            <path d="M1328 741.500h10M1328 744.500h10M1328 747.500h10" stroke="#222" />
            <circle cx="1340.500" cy="753.500" r="8" fill="#3a3a3a" stroke="#858585" />
            <ChartText $size={11} x="1340.500" y="757.500" textAnchor="middle" fill="#fff">3</ChartText>
          </svg>
        </TrayIcon>
        <PeekEdge />
      </Tray>
    </Taskbar>
  );
}

export default function App() {
  return (
    <Desktop>
      <Global />
      <BackWindow>
        <BackTabs />
        <BackBar />
        <BackPage>
          <BackStrip>
            <BackColumn $w={52} $line="#999" />
            <BackColumn $w={287} $line="#999" />
            <BackColumn $w={17} $line="#bbb" />
            <BackText><Fit w={226} size={14.5} lh={21} color="#111">Nu mai puteți consulta încercări</Fit></BackText>
          </BackStrip>
          <BackScroll><BackThumb /></BackScroll>
        </BackPage>
      </BackWindow>
      <TaskbarView />
      <Window>
        <TitleBar>
          <Ring size={15} dark />
          <Fit w={368} size={11.5} lh={18}>3.Examen-Grila-P1-Secventiale: Revizuirea încercării – Google Chrome</Fit>
          <WindowButtons>
            <svg width="11" height="11" viewBox="0 0 11 11"><path d="M0 5.500h10.500" stroke="#fff" /></svg>
            <svg width="11" height="11" viewBox="0 0 11 11"><path d="M.5.5h9.500v9.500H.5z" fill="none" stroke="#fff" /></svg>
            <svg width="11" height="11" viewBox="0 0 11 11"><path d="M.5.5l10 10M10.500.5l-10 10" stroke="#fff" strokeWidth="1.200" /></svg>
          </WindowButtons>
        </TitleBar>
        <AddressBar>
          <LockSlot>
            <svg width="9" height="12" viewBox="0 0 9 12">
              <path d="M2 5V3.500Q2 1 4.500 1T7 3.500V5" fill="none" stroke="#e8eaed" strokeWidth="1.400" />
              <rect y="4.500" width="9" height="7" rx="1" fill="#e8eaed" />
            </svg>
          </LockSlot>
          <Fit w={53} size={13} color="#fff">cv.upt.ro</Fit>
          <Fit w={345} size={13} color="#8f9396">/mod/quiz/review.php?attempt=397345&cmid=244528</Fit>
        </AddressBar>
        <Viewport>
          <Page>
            <SiteHeader>
              <Ring size={38} />
              <Fit w={18} size={14.5} lh={22} color="#333">CV</Fit>
            </SiteHeader>
            <Columns>
              <LeftPane />
              <Main>
                <Info>
                  <Baseline>
                    <Fit w={20} size={17.5} weight={700}>13</Fit>
                    <Fit w={45} size={11} color="#495057">întrebare</Fit>
                  </Baseline>
                  <Fit w={35} size={12}>Corect</Fit>
                  <div>
                    <Fit w={82} size={12}>Marcat 1,00 din</Fit>
                    <Fit w={22} size={12}>1,00</Fit>
                  </div>
                  <div>
                    <Line $gap={6}>
                      <svg width="10" height="12" viewBox="0 0 10 12">
                        <path d="M.5 1.500L3 11.500M1 1.500q4 1.500 8.500 0L5.500 7 3 6.500M2 3l5 1" fill="none" stroke="#888" />
                      </svg>
                      <Fit w={63} size={12}>Întrebare cu</Fit>
                    </Line>
                    <Fit w={19} size={12}>flag</Fit>
                  </div>
                </Info>
                <Question>
                  <Prompt>
                    <Fit w={563} size={14} lh={24}>Pentru numaratorul cu diagrama de timp din figura, starea urmatoare a starii 14 este?</Fit>
                  </Prompt>
                  <WaveWindow />
                  <AnswerTitle>
                    <Fit w={172} size={14} lh={24}>Selectați răspunsul corect:</Fit>
                  </AnswerTitle>
                  <Answer><Radio /><Fit w={23} size={14} lh={24}>a. 0</Fit></Answer>
                  <Answer>
                    <Radio $on />
                    <Fit w={28} size={14} lh={24}>b.  6</Fit>
                    <Mark>
                      <svg width="15" height="12" viewBox="0 0 15 12"><path d="M2 5.500l4 4L13 2" fill="none" stroke="#398439" strokeWidth="3.400" /></svg>
                    </Mark>
                  </Answer>
                  <Answer><Radio /><Fit w={22} size={14} lh={24}>c. 5</Fit></Answer>
                </Question>
              </Main>
              <RightPane />
            </Columns>
          </Page>
          <ScrollBar>
            <svg width="7" height="4" viewBox="0 0 7 4"><path d="M0 4l3.500-4L7 4z" fill="#505050" /></svg>
            <ScrollThumb />
            <svg width="7" height="4" viewBox="0 0 7 4"><path d="M0 0l3.500 4L7 0z" fill="#505050" /></svg>
          </ScrollBar>
        </Viewport>
      </Window>
    </Desktop>
  );
}
